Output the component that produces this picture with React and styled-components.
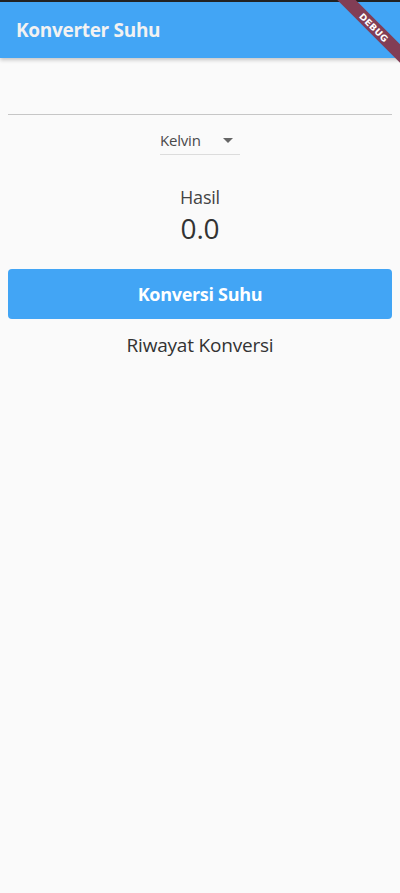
import React from "react";
import styled, { createGlobalStyle } from "styled-components";

const Global = createGlobalStyle`
  html, body { margin: 0; padding: 0; background: #fafafa; }
  body { font-family: "Open Sans", "Noto Sans", sans-serif; }
`;

const Screen = styled.div`
  position: relative;
  width: 400px;
  height: 893px;
  background: #fafafa;
  overflow: hidden;
`;

const StatusBar = styled.div`
  height: 2px;
  background: #232323;
`;

const AppBar = styled.header`
  height: 56px;
  background: #42a5f5;
  display: flex;
  align-items: center;
  padding: 0 16px;
  box-shadow: 0 2px 4px rgba(0, 0, 0, 0.22);
  position: relative;
  z-index: 1;
`;

const Title = styled.h1`
  margin: 0;
  font-size: 19px;
  font-weight: 700;
  color: #f2f2f2;
  letter-spacing: -0.3px;
`;

const Body = styled.main`
  padding: 0 8px;
  display: flex;
  flex-direction: column;
  align-items: center;
`;

const InputField = styled.input`
  box-sizing: border-box;
  width: 100%;
  margin-top: 20px;
  height: 37px;
  border: none;
  border-bottom: 1.5px solid #c6c6c6;
  background: transparent;
  outline: none;
  font-family: inherit;
  font-size: 16px;
`;

const Select = styled.div`
  margin-top: 11px;
  width: 80px;
  height: 29px;
  box-sizing: border-box;
  border-bottom: 1.5px solid #dcdcdc;
  display: flex;
  align-items: center;
  justify-content: space-between;
  padding-right: 7px;
`;

const SelectText = styled.span`
  font-size: 15px;
  color: #4a4a4a;
  letter-spacing: -0.2px;
`;

const Caret = styled.span`
  width: 0;
  height: 0;
  border-left: 5px solid transparent;
  border-right: 5px solid transparent;
  border-top: 5px solid #666;
`;

const Label = styled.div`
  margin-top: ${(p) => p.$mt}px;
  font-size: ${(p) => p.$size}px;
  color: ${(p) => p.$color};
  line-height: 1.3;
  letter-spacing: -0.2px;
`;

const Button = styled.button`
  margin-top: 22px;
  width: 100%;
  height: 50px;
  border: none;
  border-radius: 4px;
  background: #42a5f5;
  color: #ffffff;
  font-family: inherit;
  font-size: 18px;
  font-weight: 700;
  letter-spacing: -0.3px;
`;

const Banner = styled.div`
  position: absolute;
  top: 21px;
  right: -34px;
  width: 120px;
  height: 13px;
  background: #823d55;
  transform: rotate(45deg);
  display: flex;
  align-items: center;
  justify-content: center;
  color: #fff;
  font-family: "DejaVu Sans", sans-serif;
  font-weight: 700;
  font-size: 9px;
  letter-spacing: 0.3px;
  z-index: 2;
`;

export default function App() {
  return (
    <>
      <Global />
      <Screen>
        <StatusBar />
        <AppBar>
          <Title>Konverter Suhu</Title>
        </AppBar>
        <Banner>DEBUG</Banner>
        <Body>
          <InputField />
          <Select>
            <SelectText>Kelvin</SelectText>
            <Caret />
          </Select>
          <Label $mt={31} $size={18} $color="#444">Hasil</Label>
          <Label $mt={1} $size={28} $color="#333">0.0</Label>
          <Button>Konversi Suhu</Button>
          <Label $mt={14} $size={19} $color="#333">Riwayat Konversi</Label>
        </Body>
      </Screen>
    </>
  );
}
